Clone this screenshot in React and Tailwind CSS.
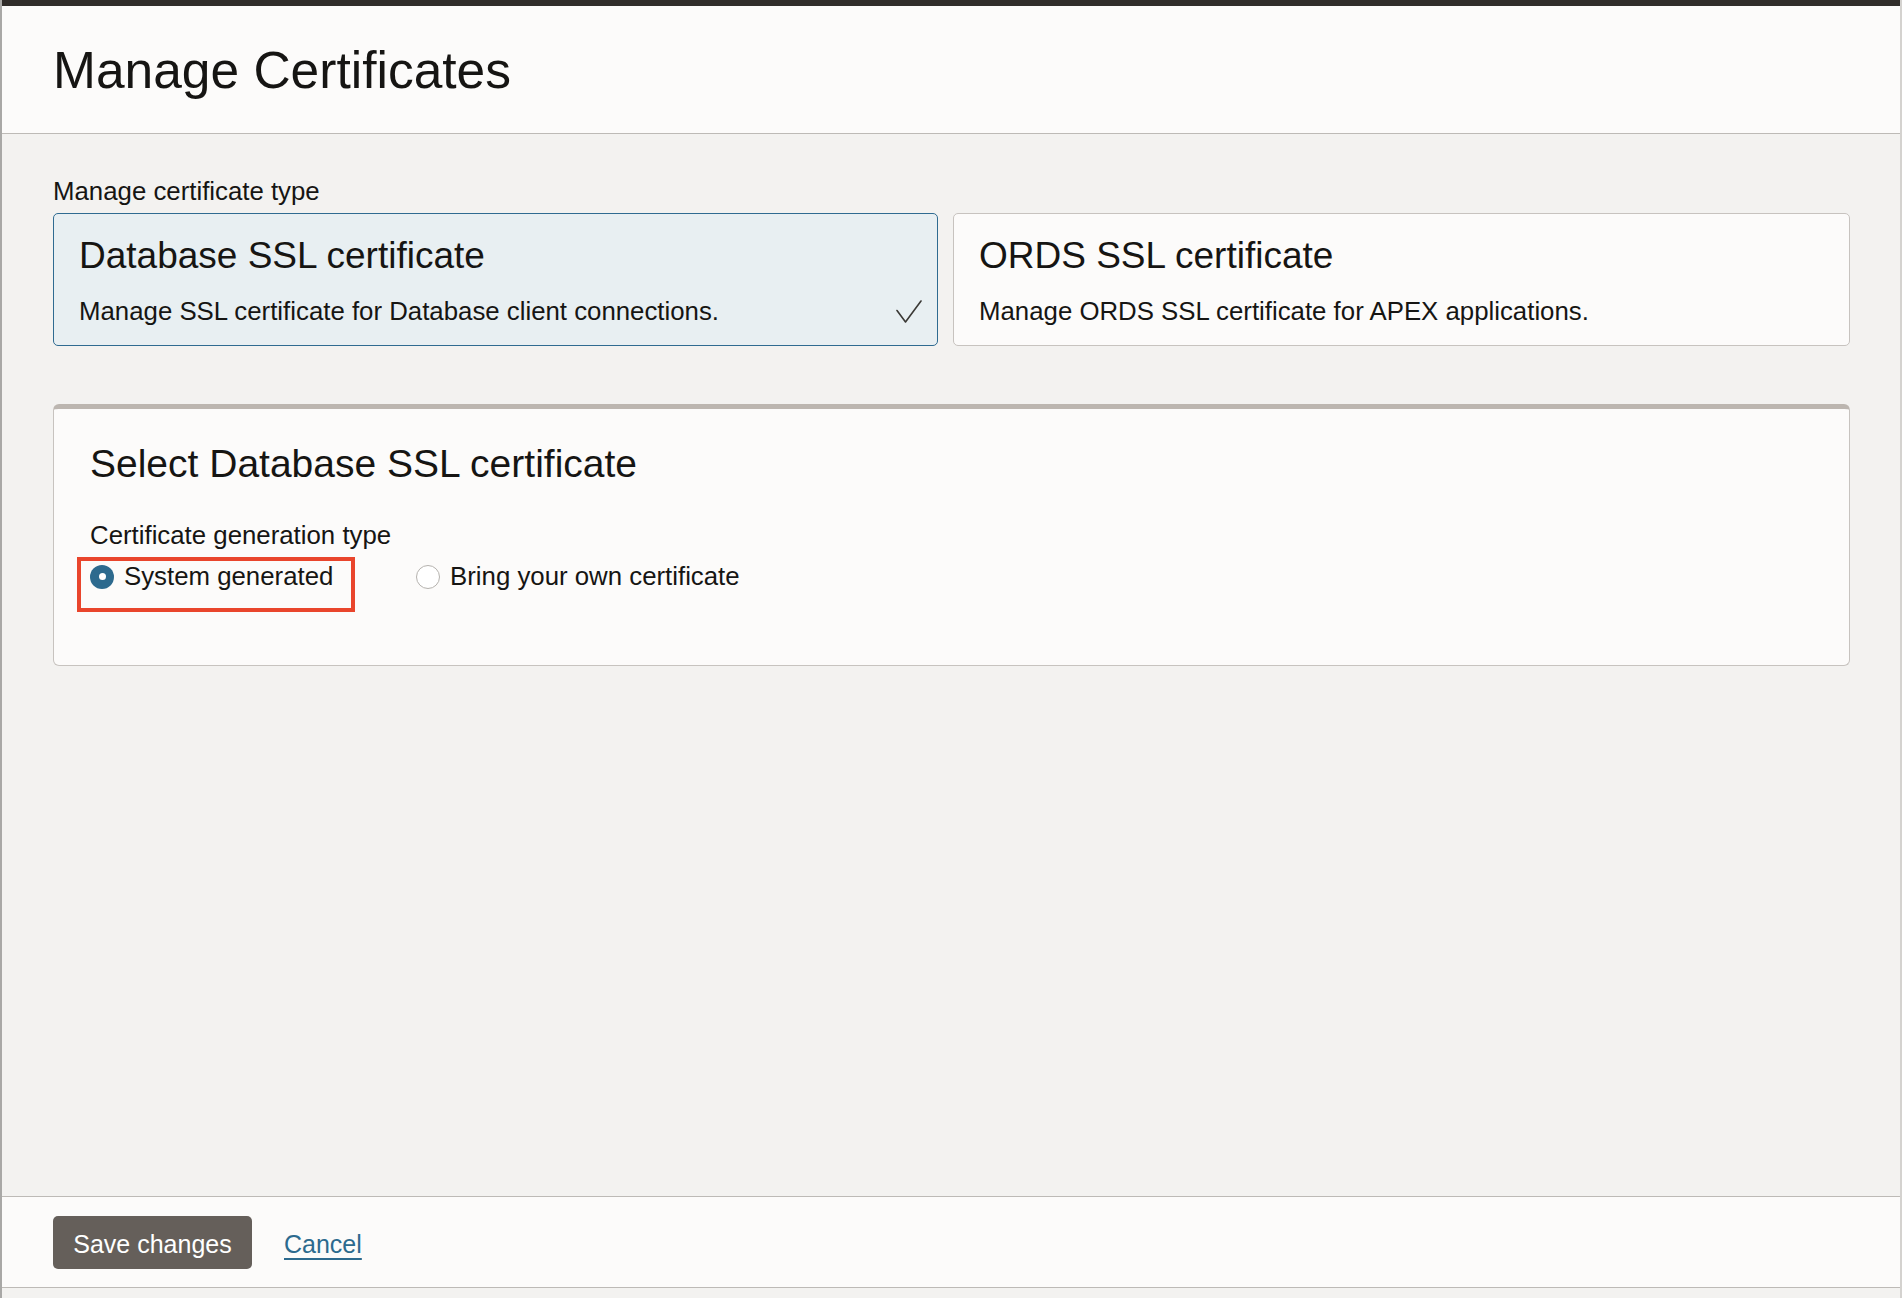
import React, { useState } from 'react';

/**
 * Manage Certificates page
 * Certificate type cards, generation type radios and footer actions
 */
const CheckMark = () => (
  <svg width="26" height="24" viewBox="0 0 26 24" fill="none" className="shrink-0">
    <polyline
      points="1,10.5 9.5,22 25,1"
      stroke="#3b3936"
      strokeWidth="1.6"
      strokeLinecap="round"
      strokeLinejoin="round"
    />
  </svg>
);

const TypeCard = ({ title, description, selected, onClick, className }) => (
  <button
    type="button"
    onClick={onClick}
    className={`flex flex-col text-left pt-[20px] pb-[18px] pl-[25px] rounded-[5px] border ${
      selected
        ? 'bg-[#e8eff2] border-[#2f6b91] pr-[15px]'
        : 'bg-[#fcfbfa] border-[#c7c3bf] pr-[23px]'
    } ${className}`}
  >
    <div className="text-[37px] leading-[43px] text-[#161513]">{title}</div>
    <div className="mt-[19px] flex items-center justify-between">
      <span className="text-[25.8px] leading-[31px] text-[#161513]">{description}</span>
      {selected && <CheckMark />}
    </div>
  </button>
);

const Radio = ({ checked }) => (
  <span
    className={`flex items-center justify-center w-[24px] h-[24px] rounded-full shrink-0 ${
      checked ? 'bg-[#2d6a8e]' : 'bg-white border border-[#b5b2ae]'
    }`}
  >
    {checked && <span className="w-[7px] h-[7px] rounded-full bg-white" />}
  </span>
);

const App = () => {
  const [certType, setCertType] = useState('database');
  const [genType, setGenType] = useState('system');

  return (
    <div
      className="h-[1298px] flex flex-col border-l-2 border-r-2 border-l-[#a9a8a6] border-r-[#d4d2cf] text-[#161513]"
      style={{ fontFamily: '"Liberation Sans", Arial, sans-serif' }}
    >
      {/* Top bar */}
      <div className="h-[6px] bg-[#312d2a]" />

      {/* Header */}
      <header className="h-[128px] flex items-center pl-[51px] bg-[#fcfbfa] border-b border-[#bdbab6]">
        <h1 className="text-[51.5px] leading-[58px] text-[#161513]">Manage Certificates</h1>
      </header>

      {/* Content */}
      <main className="flex-1 bg-[#f3f2f0] pl-[51px] pr-[50px] pt-[42px]">
        <div className="text-[25.8px] leading-[31px] mb-[6px]">Manage certificate type</div>
        <div className="flex gap-[15px]">
          <TypeCard
            title="Database SSL certificate"
            description="Manage SSL certificate for Database client connections."
            selected={certType === 'database'}
            onClick={() => setCertType('database')}
            className="w-[885px]"
          />
          <TypeCard
            title="ORDS SSL certificate"
            description="Manage ORDS SSL certificate for APEX applications."
            selected={certType === 'ords'}
            onClick={() => setCertType('ords')}
            className="flex-1"
          />
        </div>

        {/* Selected certificate section */}
        <section className="mt-[58px] bg-[#fcfbfa] border border-[#c7c3bf] border-t-[5px] border-t-[#bcb6b0] rounded-[6px] pl-[36px] pt-[31px] pb-[53px]">
          <h2 className="text-[39px] leading-[47px]">Select Database SSL certificate</h2>
          <div className="mt-[33px] text-[25.8px] leading-[31px]">Certificate generation type</div>
          <div className="mt-[6px] flex items-start">
            <div className="-ml-[13px] w-[278px] h-[55px] border-[4px] border-[#e9452c] pl-[9px]">
              <label
                className="flex items-center gap-[10px] cursor-pointer"
                onClick={() => setGenType('system')}
              >
                <Radio checked={genType === 'system'} />
                <span className="text-[25.8px] leading-[31px]">System generated</span>
              </label>
            </div>
            <label
              className="ml-[61px] mt-[4px] flex items-center gap-[10px] cursor-pointer"
              onClick={() => setGenType('own')}
            >
              <Radio checked={genType === 'own'} />
              <span className="text-[25.8px] leading-[31px]">Bring your own certificate</span>
            </label>
          </div>
        </section>
      </main>

      {/* Footer */}
      <footer className="h-[92px] flex items-center gap-[32px] pl-[51px] bg-[#fcfbfa] border-t border-b border-[#bdbab6]">
        <button
          type="button"
          className="w-[199px] h-[53px] pt-[4px] rounded-[5px] bg-[#655f5a] text-white text-[25px] leading-[30px]"
        >
          Save changes
        </button>
        <a
          href="#"
          className="mt-[4px] text-[25px] leading-[30px] text-[#2c6a8e] underline underline-offset-[5px] decoration-[1.5px]"
        >
          Cancel
        </a>
      </footer>
      <div className="h-[10px] bg-[#f3f2f0]" />
    </div>
  );
};

export default App;
